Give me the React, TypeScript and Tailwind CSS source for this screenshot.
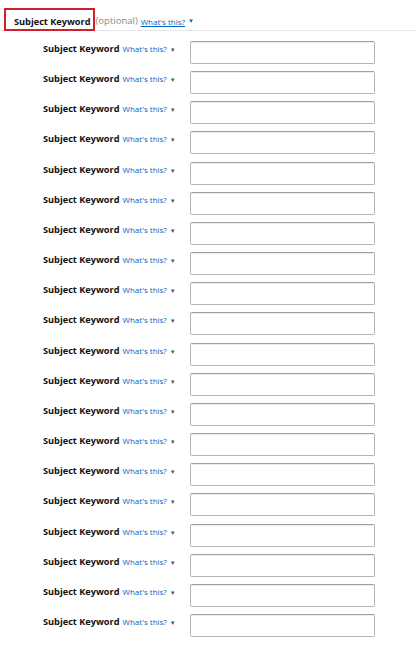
import React from "react";

// one repeated keyword row
const KeywordRow: React.FC = () => (
  <div className="flex items-start h-[30.16px]">
    <div className="w-[190px] shrink-0 pl-[43px] pt-[1px] flex items-baseline whitespace-nowrap">
      <span className="text-[9.2px] font-bold text-[#111]">Subject Keyword</span>
      <span className="ml-[3px] text-[8px] text-[#0066c0]">What&apos;s this?</span>
      <span className="ml-[3px] text-[6px] text-[#555]">▼</span>
    </div>
    <input
      type="text"
      className="w-[185px] h-[23px] border border-[#b5b5b5] border-t-[#a0a0a0] rounded-[2px] bg-white shadow-[inset_0_1px_0_rgba(0,0,0,0.07)] outline-none"
    />
  </div>
);

const App: React.FC = () => {
  const rows = Array.from({ length: 20 }, (_, i) => i);

  return (
    <div className="w-[419px] h-[655px] bg-white overflow-hidden font-['Open_Sans',sans-serif]">
      {/* Header */}
      <div className="mt-[8px] mr-[4px] flex items-center h-[23px] border-b border-[#e7e7e7]">
        <div className="ml-[4px] h-[23px] pl-[8px] pr-[2px] pt-[5px] flex items-center border-2 border-[#d0202a]">
          <span className="text-[9.2px] font-bold text-[#111]">Subject Keyword</span>
        </div>
        <span className="ml-[1px] pt-[5px] text-[9.5px] text-[#888]">(optional)</span>
        <span className="ml-[3px] pt-[5px] text-[8px] text-[#0066c0] underline">What&apos;s this?</span>
        <span className="ml-[3px] pt-[5px] text-[6px] text-[#0066c0]">▼</span>
      </div>

      {/* Rows */}
      <div className="mt-[10px] flex flex-col">
        {rows.map((i) => (
          <KeywordRow key={i} />
        ))}
      </div>
    </div>
  );
};

export default App;
